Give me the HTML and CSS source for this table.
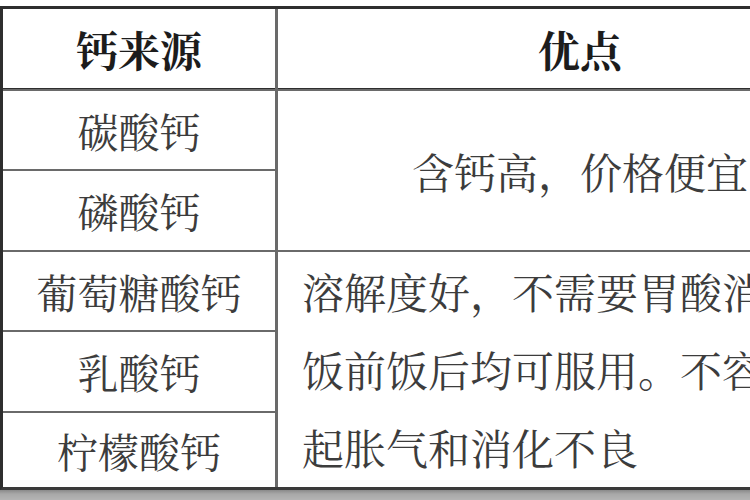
FILE: index.html
```html
<!DOCTYPE html>
<html lang="zh-CN">
<head>
<meta charset="utf-8">
<title>钙来源</title>
<link rel="stylesheet" href="styles.css">
</head>
<body>
<div class="page">
  <div class="sheet">
    <div class="cell head">钙来源</div>
    <div class="cell head">优点</div>
    <div class="cell name">碳酸钙</div>
    <div class="cell merit merit-a">含钙高，价格便宜</div>
    <div class="cell name">磷酸钙</div>
    <div class="cell name">葡萄糖酸钙</div>
    <div class="cell merit merit-b">溶解度好，不需要胃酸消化，<br>饭前饭后均可服用。不容易引<br>起胀气和消化不良</div>
    <div class="cell name">乳酸钙</div>
    <div class="cell name">柠檬酸钙</div>
  </div>
  <div class="band"></div>
</div>
</body>
</html>
```
FILE: styles.css
```css
html, body {
  margin: 0;
  padding: 0;
  background: #ffffff;
}
.page {
  width: 750px;
  height: 500px;
  overflow: hidden;
  background: #ffffff;
  padding-top: 6px;
  box-sizing: border-box;
  display: flex;
  flex-direction: column;
}
.sheet {
  width: 884px;
  flex: none;
  display: grid;
  grid-template-columns: 272px 604px;
  grid-template-rows: 80px 78px 79px 78px 79px 74px;
  row-gap: 2px;
  column-gap: 3px;
  background: #6a6a6a;
  border-top: 3px solid #2e2e2e;
  border-left: 3px solid #2e2e2e;
  border-bottom: 3px solid #3a3a3a;
  font-family: "Noto Serif CJK SC", "Noto Sans CJK SC", serif;
}
.cell {
  background: #ffffff;
  display: flex;
  align-items: center;
  justify-content: center;
  color: #3c3c3c;
  font-size: 41px;
  line-height: 1;
  white-space: nowrap;
}
.head {
  font-weight: 700;
  color: #1c1c1c;
  font-size: 42px;
  border-bottom: 1px solid #2e2e2e;
}
.sheet .head {
  background: #ffffff;
}
.merit {
  font-size: 42px;
}
.merit-a {
  grid-column: 2;
  grid-row: 2 / span 2;
}
.merit-b {
  grid-column: 2;
  grid-row: 4 / span 3;
  justify-content: flex-start;
  align-items: flex-start;
  padding-left: 24px;
  line-height: 78px;
  margin-top: 0;
}
.band {
  flex: 1;
  background: linear-gradient(#8a8a8a, #a8a8a8 40%, #b4b4b4);
}
```
